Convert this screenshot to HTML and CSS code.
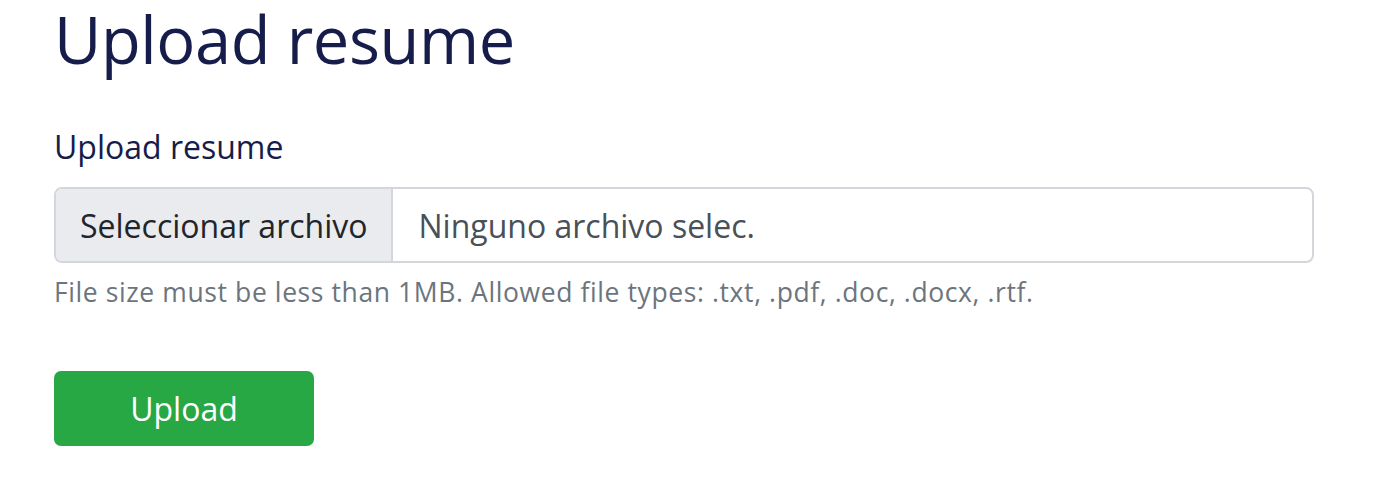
FILE: index.html
```html
<!DOCTYPE html>
<html>
<head>
<meta charset="utf-8">
<link rel="stylesheet" href="styles.css">
</head>
<body>
<main class="page">
  <h1 class="title">Upload resume</h1>
  <form class="form">
    <label class="label">Upload resume</label>
    <div class="file">
      <span class="file-btn">Seleccionar archivo</span>
      <span class="file-name">Ninguno archivo selec.</span>
    </div>
    <p class="help">File size must be less than 1MB. Allowed file types: .txt, .pdf, .doc, .docx, .rtf.</p>
    <button type="button" class="btn">Upload</button>
  </form>
</main>
</body>
</html>
```
FILE: styles.css
```css
html, body { margin: 0; padding: 0; background: #fff; }
body { font-family: "Open Sans", "Liberation Sans", sans-serif; }
.page { padding: 3px 70px 0 54px; }
.title { margin: 0; font-size: 65px; font-weight: 400; line-height: 72px; letter-spacing: -0.4px; color: #161d4a; }
.form { display: flex; flex-direction: column; align-items: flex-start; margin-top: 48px; }
.label { font-size: 32px; line-height: 48px; color: #161d4a; margin-bottom: 16px; }
.file { display: flex; align-self: stretch; height: 76px; border: 2px solid #d3d7dc; border-radius: 8px; overflow: hidden; box-sizing: border-box; }
.file-btn { display: flex; align-items: center; padding: 0 24px; background: #e9ebef; border-right: 2px solid #d3d7dc; font-size: 32px; color: #212529; }
.file-name { display: flex; align-items: center; padding: 0 25px; font-size: 32px; color: #495057; }
.help { margin: 9px 0 0; font-size: 26.5px; line-height: 40px; letter-spacing: 0.6px; color: #6c757d; }
.btn { margin-top: 59px; width: 260px; height: 75px; border: 0; border-radius: 7px; background: #28a745; color: #fff; font-family: inherit; font-size: 32px; padding: 0; }
```
